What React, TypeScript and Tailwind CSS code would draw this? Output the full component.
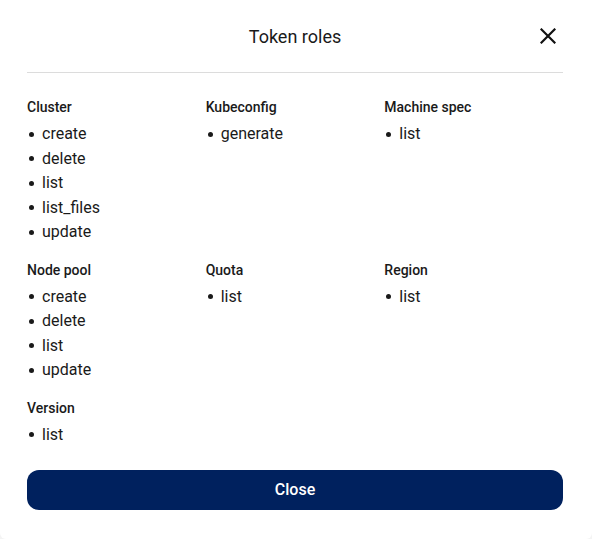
import React from "react";

const groups: { title: string; items: string[] }[][] = [
  [
    { title: "Cluster", items: ["create", "delete", "list", "list_files", "update"] },
    { title: "Kubeconfig", items: ["generate"] },
    { title: "Machine spec", items: ["list"] },
  ],
  [
    { title: "Node pool", items: ["create", "delete", "list", "update"] },
    { title: "Quota", items: ["list"] },
    { title: "Region", items: ["list"] },
  ],
  [{ title: "Version", items: ["list"] }],
];

function Group({ title, items }: { title: string; items: string[] }) {
  return (
    <div>
      <div className="text-[14px] leading-[20px] font-medium text-[#1a1a1a] mb-[5px]">{title}</div>
      <ul>
        {items.map((it) => (
          <li key={it} className="flex items-center h-[24.5px] text-[16px] text-[#1a1a1a]">
            <span className="w-[5px] h-[5px] rounded-full bg-[#1a1a1a] ml-[2px] mr-[8px]" />
            {it}
          </li>
        ))}
      </ul>
    </div>
  );
}

export default function App() {
  return (
    <div className="w-[592px] h-[539px] bg-[#f4f4f4]" style={{ fontFamily: "Roboto, 'Liberation Sans', sans-serif" }}>
      <div className="w-full h-full bg-white rounded-b-[6px] pl-[27px] pr-[29px] flex flex-col">
        <div className="relative flex items-center justify-center pt-[24px] pb-[22px] h-[72px]">
          <div className="text-[18px] leading-[26px] text-[#1a1a1a]">Token roles</div>
          <button className="absolute right-[7px] top-[28px] w-[16px] h-[16px]">
            <svg width="16" height="16" viewBox="0 0 16 16">
              <path d="M1.5 1.5 L14.5 14.5 M14.5 1.5 L1.5 14.5" stroke="#111" strokeWidth="2.2" strokeLinecap="square" />
            </svg>
          </button>
        </div>
        <div className="h-px bg-[#dcdcdc]" />
        <div className="pt-[24px] flex flex-col gap-[15px]">
          {groups.map((row, i) => (
            <div key={i} className="grid grid-cols-3">
              {row.map((g) => (
                <Group key={g.title} {...g} />
              ))}
            </div>
          ))}
        </div>
        <button className="mt-[23px] h-[40px] w-full rounded-[12px] bg-[#00215e] text-white text-[16px] font-medium">
          Close
        </button>
      </div>
    </div>
  );
}
